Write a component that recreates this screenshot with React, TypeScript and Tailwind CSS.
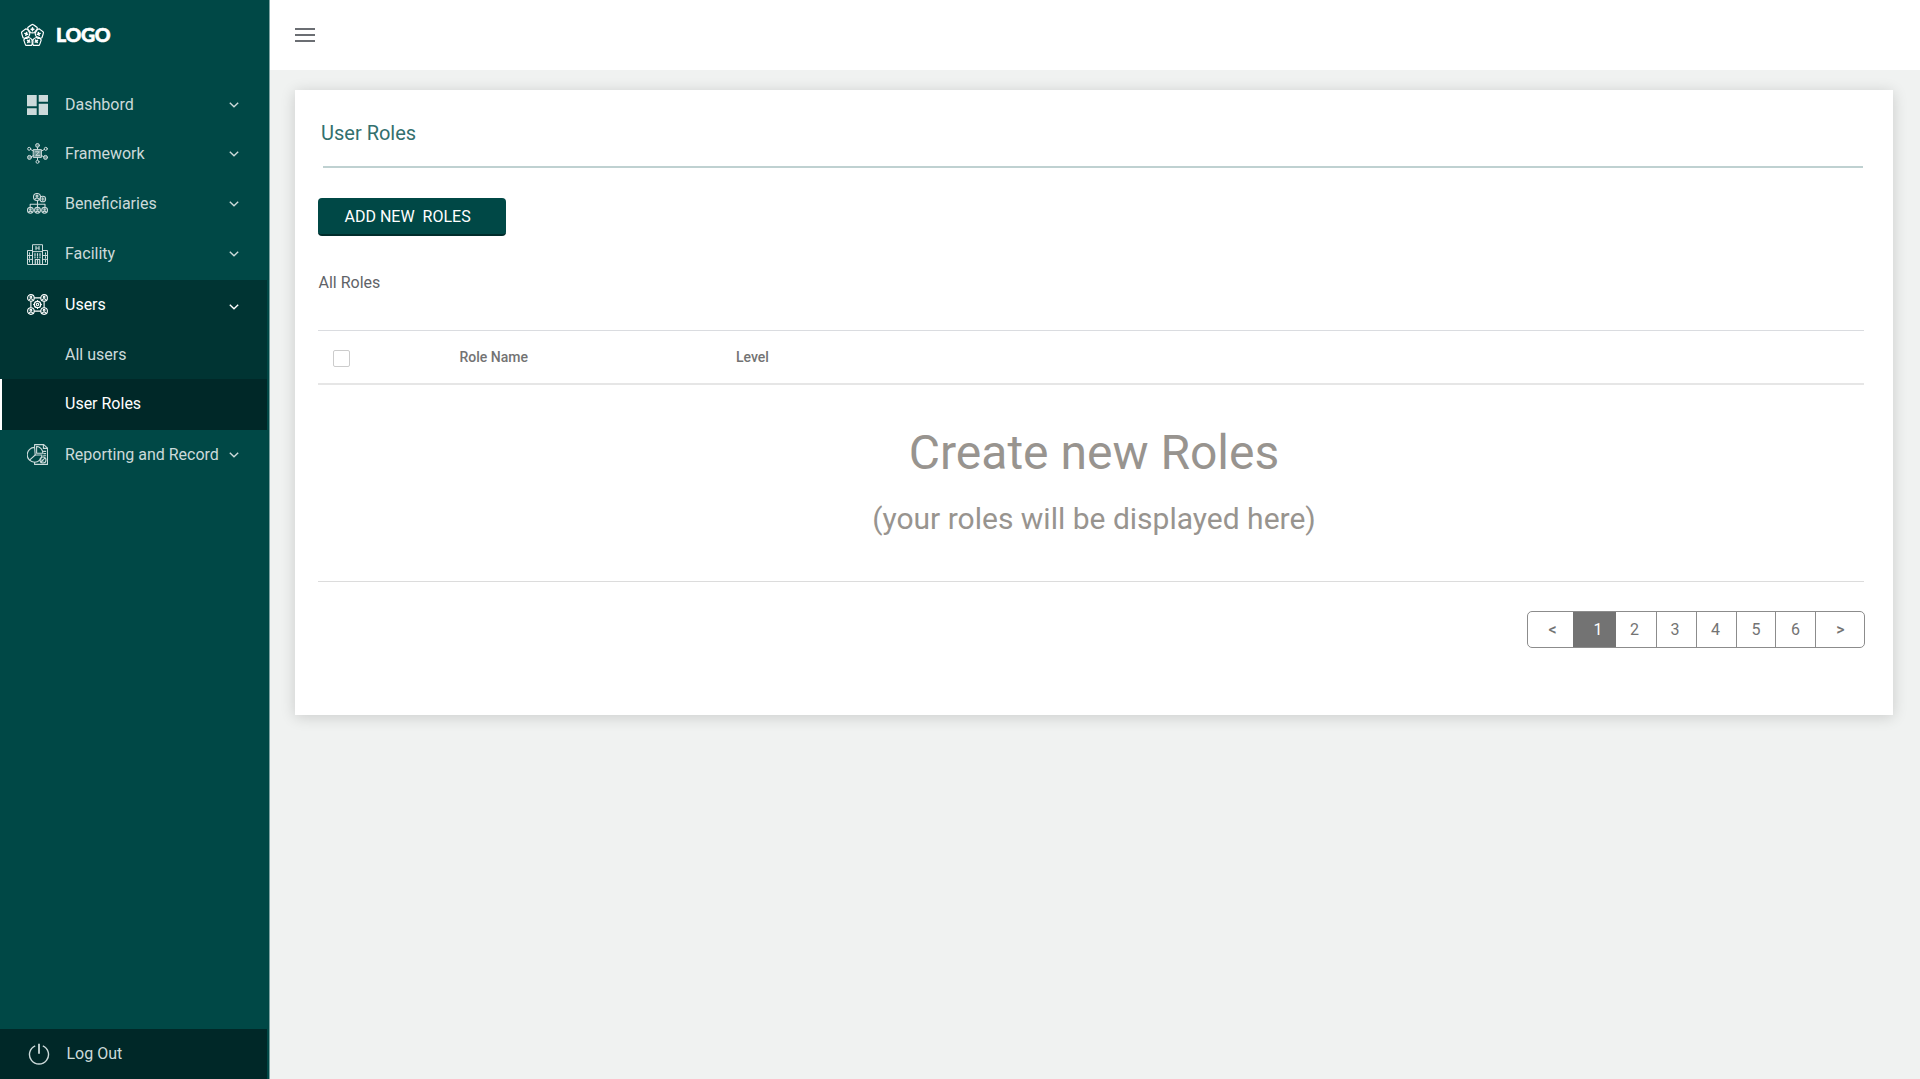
import React from "react";

type IconProps = { className?: string };

const stroke = {
  fill: "none",
  stroke: "currentColor",
  strokeWidth: 1,
  strokeLinecap: "round" as const,
  strokeLinejoin: "round" as const,
};

function LogoMark() {
  const petals = [0, 72, 144, 216, 288];
  return (
    <svg width="24" height="24" viewBox="0 0 24 24" className="shrink-0 text-white" {...stroke} strokeWidth={1.2}>
      {petals.map((a) => (
        <g key={a} transform={`rotate(${a} 12.5 12.9)`}>
          <path d="M12.5 1.4 Q13 1.4 17.2 4.5 Q17.8 7 15.8 9.2 Q12.5 10.4 9.2 9.2 Q7.2 7 7.8 4.5 Q12 1.4 12.5 1.4Z" />
          <path d="M12.5 4.8v3M11.1 6.3h2.8" strokeWidth={1.5} />
        </g>
      ))}
    </svg>
  );
}

function DashboardIcon() {
  return (
    <svg width="21" height="20" viewBox="0 0 21 20" fill="currentColor">
      <path d="M0 0h9.7v11.2H0zM11.7 0H21v6.8h-9.3zM0 13.2h9.7V20H0zM11.7 8.8H21V20h-9.3z" />
    </svg>
  );
}

function FrameworkIcon() {
  return (
    <svg width="21" height="21" viewBox="0 0 21 21" {...stroke}>
      <rect x="6.6" y="6.6" width="7.8" height="7.8" fill="currentColor" fillOpacity="0.5" />
      <path d="M8.6 8.8h3.8l-3.6 3.6h3.8M10.5 4.2v2.4M10.5 14.4v2.4M3.6 6.4l3 1.8M17.4 6.4l-3 1.8M4 13.8l2.6-1.2M17 13.8l-2.6-1.2" />
      <circle cx="10.5" cy="2.4" r="1.9" fill="currentColor" fillOpacity="0.4" />
      <circle cx="10.5" cy="18.8" r="1.5" />
      <circle cx="2.2" cy="5.8" r="1.5" />
      <circle cx="18.8" cy="5.8" r="1.5" />
      <circle cx="2.5" cy="14.4" r="2" fill="currentColor" fillOpacity="0.5" />
      <circle cx="18.5" cy="14.4" r="2" fill="currentColor" fillOpacity="0.5" />
    </svg>
  );
}

function BeneficiariesIcon() {
  return (
    <svg width="21" height="21" viewBox="0 0 21 21" {...stroke} strokeWidth={1.1}>
      <circle cx="10" cy="4" r="3.5" />
      <circle cx="10" cy="3.1" r="1" />
      <path d="M8 6.2q2-2.4 4 0" />
      <circle cx="15.8" cy="6" r="2.8" />
      <path d="M15.8 4.6v2.8M14.6 6h2.6M10.5 8v6M3.2 13.6v-2.4h14.8v2.4" />
      {[3.4, 10.5, 17.6].map((x) => (
        <g key={x}>
          <circle cx={x} cy="17.3" r="2.9" />
          <circle cx={x} cy="16.5" r="0.7" />
          <path d={`M${x - 1.6} 19q1.6-1.7 3.2 0`} />
        </g>
      ))}
    </svg>
  );
}

function FacilityIcon() {
  return (
    <svg width="21" height="21" viewBox="0 0 21 21" {...stroke}>
      <path d="M5.5 20.5V.7h10v19.8M5.5 6.5h-5v14h20v-14h-5" />
      <path d="M9 2.4v3.4M12 2.4v3.4M9 4.1h3M6 7.6h9" />
      <path d="M2.5 8.8v1.6M2.5 12.6v1.6M2.5 16.4V18M18.5 8.8v1.6M18.5 12.6v1.6M18.5 16.4V18M.5 11.5h5M.5 15.4h5M15.5 11.5h5M15.5 15.4h5" />
      <path d="M8 9.6v1.8M10.5 9.6v1.8M13 9.6v1.8M8 12.8v1M10.5 12.8v1M13 12.8v1M8.3 20.5v-5h4.4v5M10.5 15.5v5" strokeWidth={1.2} />
    </svg>
  );
}

function UsersIcon() {
  const corners = [
    [3.9, 3.9],
    [17.1, 3.9],
    [3.9, 17.1],
    [17.1, 17.1],
  ];
  return (
    <svg width="21" height="21" viewBox="0 0 21 21" {...stroke} strokeWidth={1.1}>
      {corners.map(([x, y]) => (
        <g key={`${x}-${y}`}>
          <circle cx={x} cy={y} r="3.3" />
          <circle cx={x} cy={y - 0.8} r="0.9" />
          <path d={`M${x - 1.9} ${y + 2.1}q1.9-2.4 3.8 0`} />
        </g>
      ))}
      <path d="M7.4 3.9h6.2M7.4 17.1h6.2M3.9 7.4v6.2M17.1 7.4v6.2" />
      <circle cx="10.5" cy="10.5" r="3.2" strokeWidth={1.3} />
      <circle cx="10.5" cy="10.5" r="1.2" />
      <path d="M10.5 6.6v1M10.5 13.4v1M6.6 10.5h1M13.4 10.5h1" />
    </svg>
  );
}

function ReportIcon() {
  return (
    <svg width="21" height="21" viewBox="0 0 21 21" {...stroke} strokeWidth={1.1}>
      <path d="M7.6 2.6V.6h9.2l3.7 3.6v16.2H7.6v-2.2" />
      <path d="M16.4.8v3.6h4" />
      <path d="M7.6 3.4a7.4 7.4 0 1 0 7.4 7.6H8.2z" />
      <path d="M8.2 11L2.8 15.8" />
      <path d="M9.6 2.4v6.8h6.2a6.6 6.6 0 0 0-6.2-6.8z" />
      <path d="M16.6 7.4h2M16.8 9.6h1.8M16.6 11.8h2" />
      <circle cx="16" cy="16" r="3" />
      <path d="M14.4 17.6l3.4-3.4M14.8 16l1.2 1.2" />
    </svg>
  );
}

function Chevron({ className = "" }: IconProps) {
  return (
    <svg width="10" height="6" viewBox="0 0 10 6" className={className} {...stroke} strokeWidth={1.4} strokeLinecap="butt" strokeLinejoin="miter">
      <path d="M.8.8L5 4.8 9.2.8" />
    </svg>
  );
}

function PowerIcon() {
  return (
    <svg width="22" height="23" viewBox="0 0 22 23" {...stroke} strokeWidth={1.4}>
      <path d="M7.2 2.8a9.5 9.5 0 1 0 7.6 0" strokeLinecap="butt" />
      <path d="M11 .8v10" strokeWidth={1.8} strokeLinecap="butt" />
    </svg>
  );
}

type NavItemProps = {
  icon: React.ReactNode;
  label: string;
  className: string;
  chevronClass?: string;
};

function NavItem({ icon, label, className, chevronClass = "" }: NavItemProps) {
  return (
    <a className={`flex items-center pr-7 pl-[27px] ${className}`}>
      <span className="flex w-[38px] shrink-0">{icon}</span>
      <span className="flex-1 whitespace-nowrap">{label}</span>
      <Chevron className={chevronClass} />
    </a>
  );
}

function Sidebar() {
  return (
    <aside className="flex w-[270px] shrink-0 flex-col border-r border-[#7fa3a3] bg-[#004846] text-base text-[#ccdada]">
      <div className="flex h-20 items-start pt-[23px] pl-5">
        <LogoMark />
        <span className="ml-3 font-['Lato'] text-[19.5px] leading-[23px] font-black tracking-[-0.3px] text-white [-webkit-text-stroke:0.6px_white]">
          LOGO
        </span>
      </div>
      <nav className="flex flex-1 flex-col pr-[2px]">
        <NavItem icon={<DashboardIcon />} label="Dashbord" className="h-[49px]" />
        <NavItem icon={<FrameworkIcon />} label="Framework" className="h-[49px]" />
        <NavItem icon={<BeneficiariesIcon />} label="Beneficiaries" className="h-[51px]" />
        <NavItem icon={<FacilityIcon />} label="Facility" className="h-[51px] pb-px" />
        <div className="bg-[#003433]">
          <NavItem icon={<UsersIcon />} label="Users" className="h-[50px] pb-px text-white" chevronClass="mt-1" />
          <a className="flex h-[49px] items-center pl-[65px]">All users</a>
          <a className="flex h-[51px] items-center border-l-2 border-white bg-[#002828] pb-px pl-[63px] text-white">User Roles</a>
        </div>
        <NavItem icon={<ReportIcon />} label="Reporting and Record" className="h-[49px]" />
      </nav>
      <a className="mr-[2px] flex h-[50px] items-center bg-[#002828] pl-7">
        <PowerIcon />
        <span className="ml-[16.5px]">Log Out</span>
      </a>
    </aside>
  );
}

function Pagination() {
  const cell = "flex h-full items-center justify-center border-r border-[#8c8c8c]";
  return (
    <div className="mt-[29px] mr-[-1px] flex h-[37px] w-[338px] self-end overflow-hidden rounded-[5px] border border-[#8c8c8c] text-base text-[#737373]">
      <span className="flex h-full w-[45px] items-center justify-center pl-1 font-medium">&lt;</span>
      <span className="flex h-full w-[43px] items-center justify-center bg-[#737373] pl-[7px] text-white">1</span>
      <span className={`${cell} w-[41px] pr-[3px]`}>2</span>
      <span className={`${cell} w-10 pr-[3px]`}>3</span>
      <span className={`${cell} w-10 pr-[2px]`}>4</span>
      <span className={`${cell} w-[39px]`}>5</span>
      <span className={`${cell} w-10`}>6</span>
      <span className="flex h-full flex-1 items-center justify-center pl-px font-medium">&gt;</span>
    </div>
  );
}

export default function App() {
  return (
    <div className="flex h-[1079px] w-[1920px] overflow-hidden bg-[#f0f2f1] font-['Roboto',sans-serif]">
      <Sidebar />
      <div className="flex flex-1 flex-col">
        <header className="flex h-[70px] items-center bg-white pl-[25px]">
          <div className="flex w-5 flex-col gap-[4px]">
            <span className="h-[2px] bg-[#6b6e73]" />
            <span className="h-[2px] bg-[#6b6e73]" />
            <span className="h-[2px] bg-[#6b6e73]" />
          </div>
        </header>
        <main className="mt-5 ml-[25px] flex h-[625px] w-[1598px] flex-col bg-white pr-[29px] pl-[23px] shadow-[0_2px_14px_rgba(0,0,0,0.16)]">
          <h1 className="mt-[31px] ml-[3px] text-xl leading-6 text-[#33706e]">User Roles</h1>
          <div className="mt-[21px] mr-[1px] ml-[5px] h-[2px] bg-[#bfd1d1]" />
          <button className="mt-[30px] flex h-[38px] w-[188px] items-center self-start rounded-[4px] border-b-2 border-[#002c2b] bg-[#004846] pt-[2px] pl-[26.5px] text-base whitespace-pre text-white">
            ADD NEW  ROLES
          </button>
          <h2 className="mt-[35px] ml-[0.5px] text-base leading-6 text-[#5f6368]">All Roles</h2>
          <div className="mt-[35px] flex h-[55px] items-center border-t border-b-2 border-t-[#dadce0] border-b-[#e6e6e6] text-sm font-medium text-[#737373]">
            <span className="mt-[3px] ml-[15px] h-[17px] w-[17px] rounded-[2px] border border-[#cccccc]" />
            <span className="ml-[109.5px] w-[276.5px]">Role Name</span>
            <span>Level</span>
          </div>
          <div className="flex h-[197px] flex-col items-center border-b border-[#dcdcdc] pl-[6px] text-[#98948f]">
            <p className="mt-10 text-5xl leading-[56px]">Create new Roles</p>
            <p className="mt-5 text-[30px] leading-9">(your roles will be displayed here)</p>
          </div>
          <Pagination />
        </main>
      </div>
    </div>
  );
}
